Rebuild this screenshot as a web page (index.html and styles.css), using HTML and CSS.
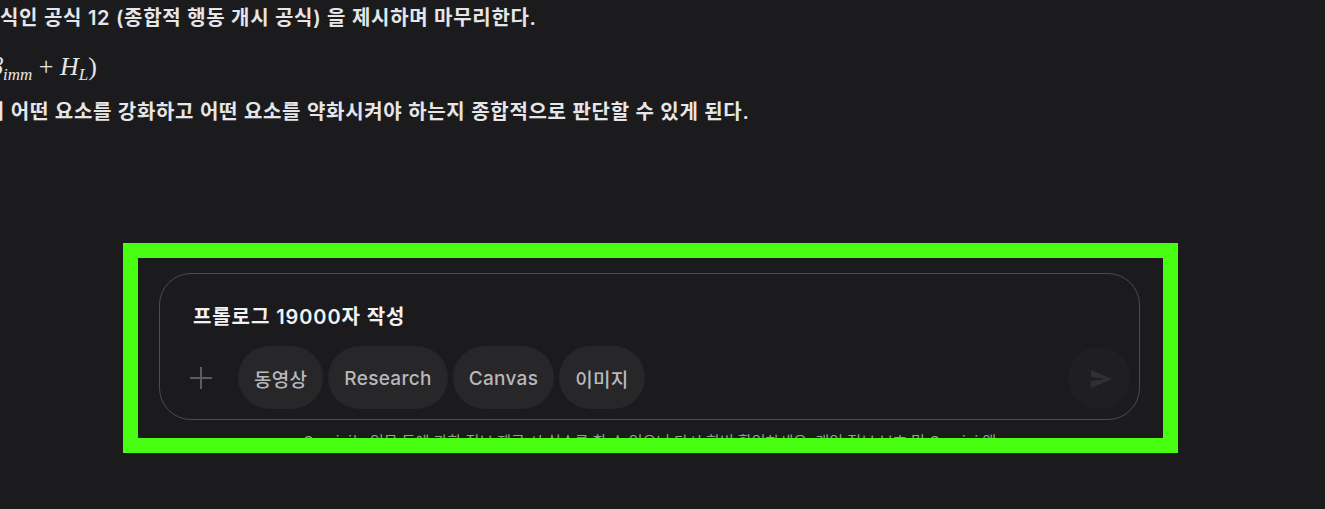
FILE: index.html
```html
<!doctype html>
<html lang="ko">
<head>
<meta charset="utf-8">
<meta name="viewport" content="initial-scale=1">
<title>Gemini</title>
<link rel="stylesheet" href="styles.css">
</head>
<body>
  <div class="answer">
    <p class="para">식인 공식 12 (종합적 행동 개시 공식) 을 제시하며 마무리한다.</p>
    <p class="math"><span class="mi beta">β</span><sub class="mi">imm</sub> <span class="op">+</span> <span class="mi">H</span><sub class="mi">L</sub><span class="op">)</span></p>
    <p class="para cut">이 어떤 요소를 강화하고 어떤 요소를 약화시켜야 하는지 종합적으로 판단할 수 있게 된다.</p>
  </div>

  <div class="composer">
    <div class="input-card">
      <div class="prompt">프롤로그 19000자 작성</div>
      <div class="tools">
        <button class="add" aria-label="추가">
          <svg width="26" height="26" viewBox="0 0 26 26"><path d="M13 2v22M2 13h22" stroke="currentColor" stroke-width="2" fill="none"/></svg>
        </button>
        <button class="chip">동영상</button>
        <button class="chip">Research</button>
        <button class="chip">Canvas</button>
        <button class="chip">이미지</button>
        <button class="send" aria-label="보내기">
          <svg width="24" height="24" viewBox="0 0 24 24"><path d="M2.01 21L23 12 2.01 3 2 10l15 2-15 2z" fill="currentColor"/></svg>
        </button>
      </div>
    </div>
    <p class="disclaimer">Gemini는 인물 등에 관한 정보 제공 시 실수를 할 수 있으니 다시 한번 확인하세요. <a href="#">개인 정보 보호 및 Gemini 앱</a></p>
  </div>

  <div class="highlight"></div>
</body>
</html>
```

FILE: styles.css
```css
* {
  box-sizing: border-box;
}

body {
  margin: 0;
  height: 509px;
  overflow: hidden;
  position: relative;
  background-color: #1b1b1d;
  color: #e6e6e8;
  font-family: Inter, "Noto Sans CJK KR", sans-serif;
}

.answer {
  padding-top: 5px;
  height: 273px;
}

.para {
  margin: 0;
  font-size: 20px;
  line-height: 26px;
  font-weight: 600;
  letter-spacing: 0.7px;
  white-space: nowrap;
}

.cut {
  margin-top: 19px;
  margin-left: -14px;
}

.math {
  margin: 23px 0 0 -10px;
  height: 26px;
  font-family: "Liberation Serif", serif;
  font-size: 26px;
  line-height: 26px;
  white-space: nowrap;
}

.mi {
  font-style: italic;
}

.math sub {
  font-size: 17px;
  line-height: 0;
  vertical-align: -5px;
}

.op {
  font-style: normal;
}

.composer {
  margin-left: 159px;
  width: 981px;
}

.input-card {
  border: 1px solid #4c4c4f;
  border-radius: 32px;
  padding: 31px 17px 10px;
}

.prompt {
  padding-left: 16px;
  font-size: 20px;
  line-height: 24px;
  font-weight: 600;
  letter-spacing: 0.9px;
  color: #f2f2f4;
}

.tools {
  display: flex;
  align-items: center;
  gap: 5px;
  margin-top: 17px;
  height: 63px;
}

button {
  font-family: inherit;
  border: none;
  cursor: pointer;
}

.add {
  width: 48px;
  height: 48px;
  margin-right: 8px;
  padding: 0;
  background: none;
  color: #5c5c5f;
  display: flex;
  align-items: center;
  justify-content: center;
}

.chip {
  height: 63px;
  padding: 2px 16px 0;
  border-radius: 32px;
  background-color: #272729;
  color: #b8b8bb;
  font-size: 19px;
  font-weight: 500;
  letter-spacing: 0.3px;
}

.send {
  margin-left: auto;
  margin-right: -8px;
  width: 62px;
  height: 62px;
  border-radius: 50%;
  background-color: #1f1f21;
  color: #303032;
  display: flex;
  align-items: center;
  justify-content: center;
  padding: 2px 0 0 4px;
}

.disclaimer {
  margin: 11px 0 0;
  text-align: center;
  font-size: 15px;
  line-height: 22px;
  color: #9a9a9c;
  white-space: nowrap;
}

.disclaimer a {
  color: inherit;
  text-decoration: underline;
  text-decoration-color: #5a5a5c;
}

.highlight {
  position: absolute;
  left: 123px;
  top: 243px;
  width: 1055px;
  height: 210px;
  border: 15px solid #48ff12;
}
```
